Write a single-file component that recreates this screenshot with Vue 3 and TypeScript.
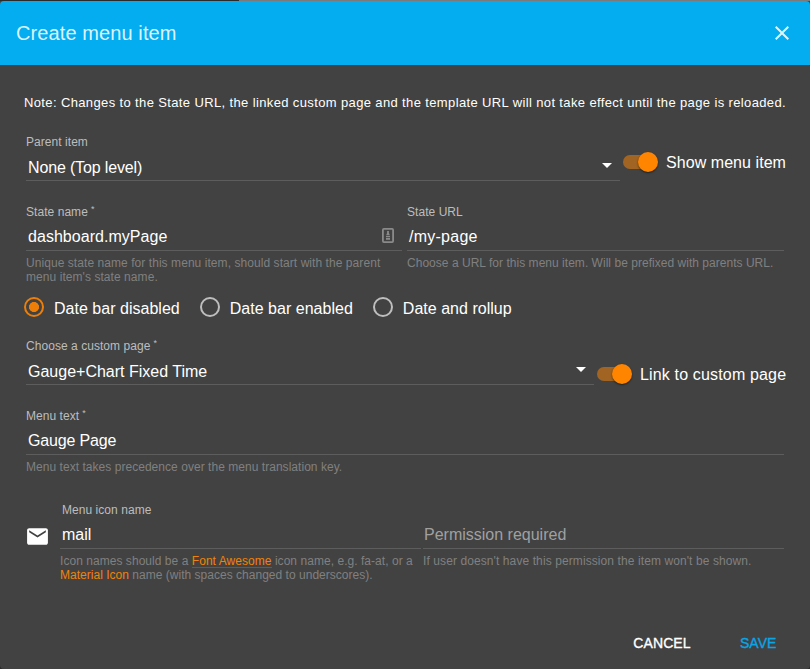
<script setup lang="ts">
import { ref } from 'vue'

const dateMode = ref(0)
const dateModes: string[] = ['Date bar disabled', 'Date bar enabled', 'Date and rollup']
const showItem = ref(true)
const linkPage = ref(true)
</script>

<template>
  <main class="dialog">
    <div class="backdrop"></div>
    <header class="toolbar">
      <h2>Create menu item</h2>
      <svg class="close" viewBox="0 0 24 24"><path d="M19 6.41L17.59 5 12 10.59 6.41 5 5 6.41 10.59 12 5 17.59 6.41 19 12 13.41 17.59 19 19 17.59 13.41 12 19 6.41z" /></svg>
    </header>

    <section class="content">
      <p class="note">Note: Changes to the State URL, the linked custom page and the template URL will not take effect until the page is reloaded.</p>

      <div class="row parent-row">
        <div class="field grow">
          <label>Parent item</label>
          <div class="value select"><span class="v-parent">None (Top level)</span><i class="caret"></i></div>
        </div>
        <div class="toggle show-toggle" @click="showItem = !showItem">
          <span class="switch" :class="{ on: showItem }"><span class="thumb"></span></span>
          <span class="toggle-text t-show">Show menu item</span>
        </div>
      </div>

      <div class="row state-row">
        <div class="field state-name">
          <label>State name<sup>*</sup></label>
          <div class="value"><span class="v-state">dashboard.myPage</span>
            <svg class="contact" viewBox="0 0 12 15"><rect x="0.9" y="0.9" width="10.2" height="13.2" rx="1" /><path d="M5.1 3h1.8v2l1 2.3H4.1L5.1 5zM4 8h4v1.2H4zM4 10h4v1.8H4z" /></svg>
          </div>
          <p class="hint"><span class="h-state">Unique state name for this menu item, should start with the parent<br>menu item's state name.</span></p>
        </div>
        <div class="field grow">
          <label>State URL</label>
          <div class="value"><span class="v-url">/my-page</span></div>
          <p class="hint"><span class="h-url">Choose a URL for this menu item. Will be prefixed with parents URL.</span></p>
        </div>
      </div>

      <div class="radios">
        <div v-for="(mode, i) in dateModes" :key="mode" class="radio" :class="{ checked: dateMode === i }" @click="dateMode = i">
          <span class="ring"></span><span class="radio-text">{{ mode }}</span>
        </div>
      </div>

      <div class="row page-row">
        <div class="field grow">
          <label>Choose a custom page<sup>*</sup></label>
          <div class="value select"><span>Gauge+Chart Fixed Time</span><i class="caret"></i></div>
        </div>
        <div class="toggle link-toggle" @click="linkPage = !linkPage">
          <span class="switch" :class="{ on: linkPage }"><span class="thumb"></span></span>
          <span class="toggle-text">Link to custom page</span>
        </div>
      </div>

      <div class="row text-row">
        <div class="field grow">
          <label>Menu text<sup>*</sup></label>
          <div class="value"><span class="v-text">Gauge Page</span></div>
          <p class="hint"><span class="h-text">Menu text takes precedence over the menu translation key.</span></p>
        </div>
      </div>

      <div class="row icon-row">
        <svg class="mail" viewBox="0 0 24 24"><path d="M20 4H4c-1.1 0-1.99.9-1.99 2L2 18c0 1.1.9 2 2 2h16c1.1 0 2-.9 2-2V6c0-1.1-.9-2-2-2zm0 4l-8 5-8-5V6l8 5 8-5v2z" /></svg>
        <div class="field icon-name">
          <label class="inset">Menu icon name</label>
          <div class="value"><span>mail</span></div>
          <p class="hint"><span class="h-icon1">Icon names should be a <a class="underlined">Font Awesome</a> icon name, e.g. fa-at, or a</span><br><span class="h-icon2"><a>Material Icon</a> name (with spaces changed to underscores).</span></p>
        </div>
        <div class="field grow">
          <label></label>
          <div class="value placeholder"><span>Permission required</span></div>
          <p class="hint"><span class="h-perm">If user doesn't have this permission the item won't be shown.</span></p>
        </div>
      </div>
    </section>

    <footer class="actions">
      <button class="cancel">CANCEL</button>
      <button class="save">SAVE</button>
    </footer>
  </main>
</template>

<style>
body { background: #2b2b2b; }
</style>

<style scoped>
* { box-sizing: border-box; }
.dialog {
  width: 810px;
  height: 669px;
  overflow: hidden;
  display: flex;
  flex-direction: column;
  background: #424242;
  color: #fff;
  font-family: "Liberation Sans", Arial, sans-serif;
  white-space: nowrap;
  border-radius: 0 0 4px 4px;
}
.backdrop { height: 1px; flex: none; background: linear-gradient(90deg, #2b2b2b 239px, #7b7b7b 239px); }
.toolbar {
  height: 64px;
  flex: none;
  display: flex;
  align-items: center;
  justify-content: space-between;
  padding: 0 16px;
  background: #03adf0;
  border-radius: 4px 4px 0 0;
  color: rgba(255, 255, 255, .87);
}
h2 { margin: 0; font-size: 20px; font-weight: 400; letter-spacing: .1px; }
.close { width: 24px; height: 24px; fill: currentColor; }
.content { flex: none; padding: 29px 26px 0; }
.note { margin: 0 -2px; font-size: 13px; line-height: 18px; letter-spacing: .37px; }
.row { display: flex; }
.parent-row { margin-top: 22px; height: 70px; }
.state-row { height: 92px; }
.page-row { margin-top: 21px; height: 70px; }
.text-row { height: 94px; }
.field { flex: none; }
.field.grow { flex: 1; min-width: 0; }
.state-name { width: 376px; margin-right: 5px; }
label { display: flex; height: 16px; font-size: 12px; line-height: 16px; color: #bdbdbd; letter-spacing: .05px; }
label.inset { padding-left: 2px; }
sup { font-size: 9px; line-height: 10px; margin-left: 3px; }
.value {
  display: flex;
  justify-content: space-between;
  height: 31px;
  padding: 4px 2px 0;
  border-bottom: 1px solid #5d5d5d;
  font-size: 16px;
  line-height: 26px;
}
.value.select { padding-top: 5px; }
.placeholder { color: #a0a0a0; padding-left: 1px; }
.v-parent { letter-spacing: -.15px; }
.v-state { letter-spacing: .04px; }
.v-url { letter-spacing: .25px; }
.v-text { letter-spacing: -.17px; }
.caret { width: 10px; height: 5px; margin: 8px 6px 0 0; background: #fff; clip-path: polygon(0 0, 100% 0, 50% 100%); }
.hint { margin: 5px 0 0; font-size: 12px; line-height: 14px; color: #808080; }
.h-state { letter-spacing: .062px; }
.h-url { letter-spacing: .03px; }
.h-text { letter-spacing: .04px; }
.h-icon1 { letter-spacing: .045px; }
.h-icon2 { letter-spacing: .02px; }
.h-perm { letter-spacing: .095px; }
a { color: #f08207; }
.underlined { display: inline-block; height: 14px; border-bottom: 1px solid #80551f; }
.contact { width: 12px; height: 15px; margin: 4px 6px 0 0; fill: #8a8a8a; }
.contact rect { fill: none; stroke: #8a8a8a; stroke-width: 1.8; }
.toggle { flex: none; display: flex; align-items: center; height: 20px; }
.show-toggle { width: 163px; margin: 18px -2px 0 3px; }
.link-toggle { width: 189px; margin: 26px -2px 0 3px; }
.switch { flex: none; width: 35px; height: 14px; display: flex; align-items: center; margin-right: 8px; border-radius: 7px; background: #a16422; }
.switch.on { justify-content: flex-end; background: linear-gradient(90deg, #a16422 26px, transparent 26px); }
.thumb { flex: none; width: 20px; height: 20px; border-radius: 50%; background: #ff8500; box-shadow: 0 1px 2px rgba(0, 0, 0, .5); }
.toggle-text { font-size: 16px; line-height: 20px; letter-spacing: .16px; padding-top: 2px; }
.t-show { letter-spacing: .06px; }
.radios { display: flex; height: 20px; margin: 1px -2px 0; }
.radio { display: flex; align-items: center; height: 20px; margin-right: 20px; }
.radio-text { font-size: 16px; line-height: 20px; letter-spacing: .02px; padding-top: 3px; }
.ring { width: 20px; height: 20px; border: 2px solid #bebebe; border-radius: 50%; margin-right: 10px; }
.checked .ring { border-color: #ed7f08; background: radial-gradient(circle, #ed7f08 4.7px, transparent 5.3px); }
.mail { width: 25px; height: 25px; fill: #fff; margin: 22px 10px 0 -1px; }
.icon-name { width: 361px; margin-right: 2px; }
.actions { flex: none; display: flex; justify-content: flex-end; margin-top: auto; padding: 0 26px 16px; height: 36px; }
button { border: 0; padding: 0; background: none; color: #fff; font: 400 14px/20px "Liberation Sans", Arial, sans-serif; letter-spacing: .1px; -webkit-text-stroke: .35px currentColor; }
.cancel { width: 58px; }
.save { width: 36px; margin: 0 8px 0 49px; color: #0aa5e5; letter-spacing: 0; }
</style>
